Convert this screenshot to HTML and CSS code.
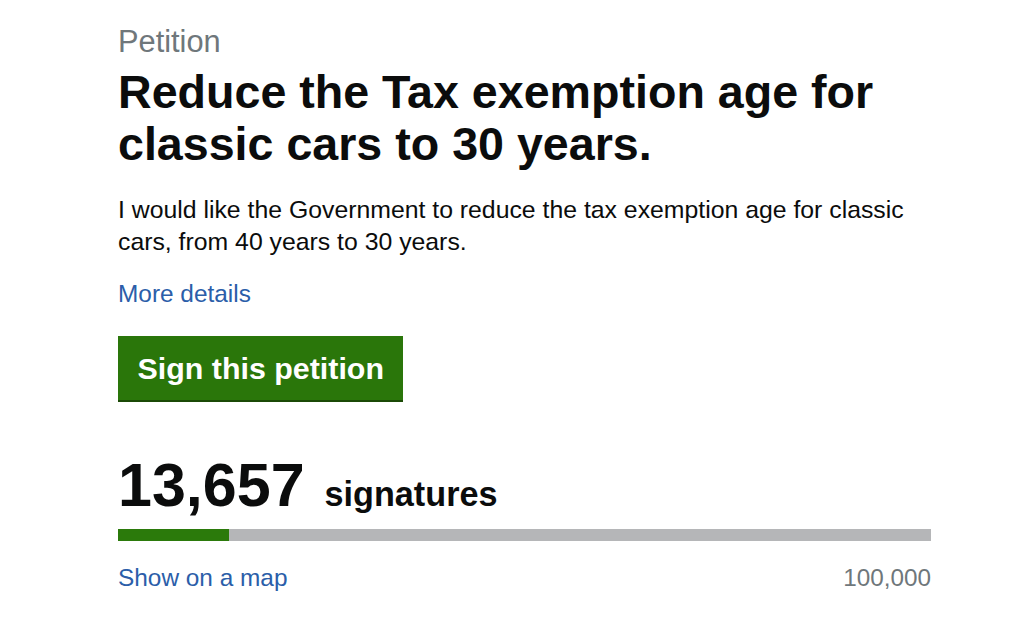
FILE: index.html
```html
<!DOCTYPE html>
<html lang="en">
<head>
<meta charset="utf-8">
<title>Petition</title>
<link rel="stylesheet" href="styles.css">
</head>
<body>
<main class="page">
  <p class="caption">Petition</p>
  <h1 class="title">Reduce the Tax exemption age for classic cars to 30 years.</h1>
  <p class="summary">I would like the Government to reduce the tax exemption age for classic cars, from 40 years to 30 years.</p>
  <a class="link details" href="#">More details</a>
  <a class="button" href="#">Sign this petition</a>
  <div class="count">
    <span class="count-number">13,657</span>
    <span class="count-label">signatures</span>
  </div>
  <div class="progress"><div class="progress-fill" style="width: 13.657%"></div></div>
  <div class="progress-foot">
    <a class="link" href="#">Show on a map</a>
    <span class="target">100,000</span>
  </div>
</main>
</body>
</html>
```

FILE: styles.css
```css
html, body {
  margin: 0;
  padding: 0;
  background: #ffffff;
}

body {
  font-family: "Liberation Sans", Arial, Helvetica, sans-serif;
  color: #0b0c0c;
}

.page {
  width: 813px;
  padding: 24px 0 0 118px;
  display: flex;
  flex-direction: column;
  align-items: flex-start;
}

.caption {
  margin: 0;
  font-size: 30.8px;
  line-height: 35px;
  color: #6f777b;
}

.title {
  margin: 7px 0 0;
  font-size: 46.6px;
  line-height: 52px;
  font-weight: 700;
}

.summary {
  margin: 24px 0 0;
  font-size: 24.8px;
  line-height: 32px;
}

.link {
  color: #2b5ea9;
  text-decoration: none;
  font-size: 24.4px;
  line-height: 32px;
}

.details {
  margin-top: 20px;
}

.button {
  margin-top: 26px;
  display: block;
  background: #2a760a;
  color: #ffffff;
  font-size: 30.4px;
  line-height: 36px;
  font-weight: 700;
  padding: 14px 19.5px;
  border-bottom: 2px solid #1b4a06;
  text-decoration: none;
}

.count {
  margin-top: 53px;
  display: flex;
  align-items: baseline;
  gap: 20px;
}

.count-number {
  font-size: 61px;
  line-height: 61px;
  font-weight: 700;
}

.count-label {
  font-size: 34.2px;
  font-weight: 700;
}

.progress {
  margin-top: 13px;
  width: 813px;
  height: 12px;
  background: #b5b6b8;
}

.progress-fill {
  height: 100%;
  background: #2b7a0b;
}

.progress-foot {
  margin-top: 21px;
  width: 813px;
  display: flex;
  justify-content: space-between;
  align-items: baseline;
}

.target {
  font-size: 24.3px;
  line-height: 32px;
  color: #6f777b;
}
```
